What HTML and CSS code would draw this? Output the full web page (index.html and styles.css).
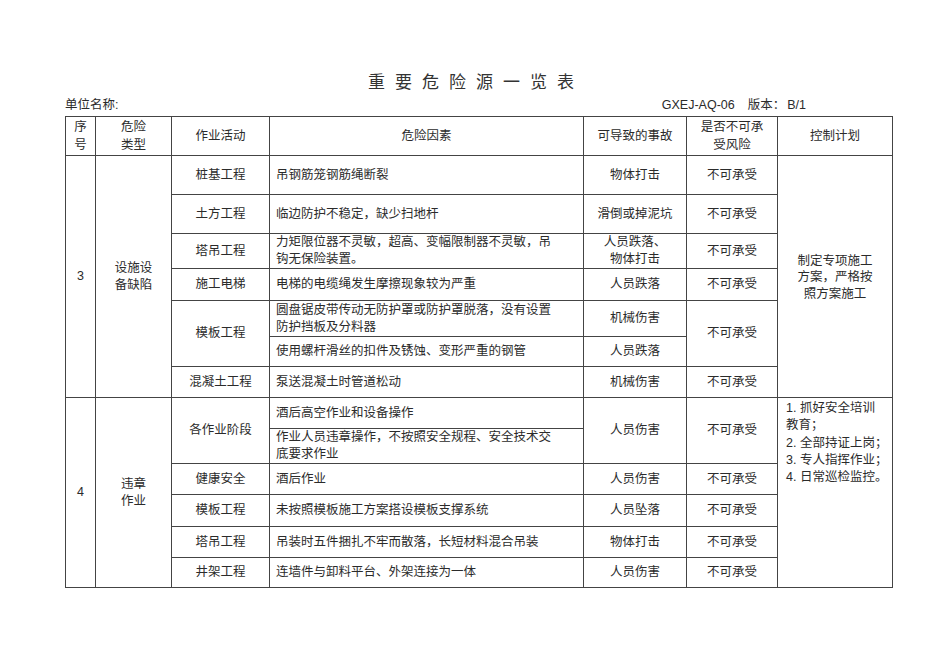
FILE: index.html
```html
<!DOCTYPE html>
<html lang="zh-CN">
<head>
<meta charset="utf-8">
<title>重要危险源一览表</title>
<link rel="stylesheet" href="styles.css">
</head>
<body>
<div class="page">
  <h1 class="title">重要危险源一览表</h1>
  <div class="meta">
    <span>单位名称:</span>
    <span class="code">GXEJ-AQ-06<span class="ver">版本：</span>B/1</span>
  </div>
  <div class="sheet">
    <div class="c hd">序<br>号</div>
    <div class="c hd">危险<br>类型</div>
    <div class="c hd">作业活动</div>
    <div class="c hd">危险因素</div>
    <div class="c hd">可导致的事故</div>
    <div class="c hd">是否不可承<br>受风险</div>
    <div class="c hd last">控制计划</div>

    <div class="c num r7">3</div>
    <div class="c r7">设施设<br>备缺陷</div>
    <div class="c">桩基工程</div>
    <div class="c f">吊钢筋笼钢筋绳断裂</div>
    <div class="c">物体打击</div>
    <div class="c">不可承受</div>
    <div class="c r7 last plan">制定专项施工<br>方案，严格按<br>照方案施工</div>

    <div class="c">土方工程</div>
    <div class="c f">临边防护不稳定，缺少扫地杆</div>
    <div class="c">滑倒或掉泥坑</div>
    <div class="c">不可承受</div>

    <div class="c">塔吊工程</div>
    <div class="c f">力矩限位器不灵敏，超高、变幅限制器不灵敏，吊钩无保险装置。</div>
    <div class="c">人员跌落、<br>物体打击</div>
    <div class="c">不可承受</div>

    <div class="c">施工电梯</div>
    <div class="c f">电梯的电缆绳发生摩擦现象较为严重</div>
    <div class="c">人员跌落</div>
    <div class="c">不可承受</div>

    <div class="c r2">模板工程</div>
    <div class="c f">圆盘锯皮带传动无防护罩或防护罩脱落，没有设置防护挡板及分料器</div>
    <div class="c">机械伤害</div>
    <div class="c r2">不可承受</div>
    <div class="c f">使用螺杆滑丝的扣件及锈蚀、变形严重的钢管</div>
    <div class="c">人员跌落</div>

    <div class="c">混凝土工程</div>
    <div class="c f">泵送混凝土时管道松动</div>
    <div class="c">机械伤害</div>
    <div class="c">不可承受</div>

    <div class="c num r6 bottom">4</div>
    <div class="c r6 bottom">违章<br>作业</div>
    <div class="c r2">各作业阶段</div>
    <div class="c f">酒后高空作业和设备操作</div>
    <div class="c r2">人员伤害</div>
    <div class="c r2">不可承受</div>
    <div class="c r6 last bottom list">1. 抓好安全培训<br>教育；<br>2. 全部持证上岗；<br>3. 专人指挥作业；<br>4. 日常巡检监控。</div>
    <div class="c f">作业人员违章操作，不按照安全规程、安全技术交底要求作业</div>

    <div class="c">健康安全</div>
    <div class="c f">酒后作业</div>
    <div class="c">人员伤害</div>
    <div class="c">不可承受</div>

    <div class="c">模板工程</div>
    <div class="c f">未按照模板施工方案搭设模板支撑系统</div>
    <div class="c">人员坠落</div>
    <div class="c">不可承受</div>

    <div class="c">塔吊工程</div>
    <div class="c f">吊装时五件捆扎不牢而散落，长短材料混合吊装</div>
    <div class="c">物体打击</div>
    <div class="c">不可承受</div>

    <div class="c bottom">井架工程</div>
    <div class="c f bottom">连墙件与卸料平台、外架连接为一体</div>
    <div class="c bottom">人员伤害</div>
    <div class="c bottom">不可承受</div>
  </div>
</div>
</body>
</html>
```

FILE: styles.css
```css
html, body {
  margin: 0;
  padding: 0;
  background: #ffffff;
}

body {
  font-family: "Liberation Sans", "Noto Sans CJK SC", sans-serif;
  color: #2b2b2b;
  font-size: 12.5px;
}

.page {
  width: 828px;
  margin-left: 65px;
  padding-top: 71px;
}

.title {
  margin: 0;
  font-family: "Noto Sans CJK SC", sans-serif;
  font-weight: 400;
  font-size: 17px;
  line-height: 20px;
  letter-spacing: 10px;
  text-align: center;
  padding-right: 6px;
  color: #333;
}

.meta {
  display: flex;
  justify-content: space-between;
  margin-top: 6px;
  height: 19px;
  line-height: 16px;
  font-size: 12.5px;
}

.code {
  padding-right: 87px;
}

.ver {
  margin-left: 13px;
  margin-right: 2px;
}

.sheet {
  display: grid;
  grid-template-columns: 30px 76px 98px 314px 103px 91px 115px;
  grid-template-rows: 39px 39px 39px 35px 32px 36px 30px 31px 31px 35px 31px 32px 31px 30px;
  border-left: 1px solid #444;
  border-top: 1px solid #444;
  width: 827px;
}

.c {
  border-right: 1px solid #444;
  border-bottom: 1px solid #444;
  display: flex;
  align-items: center;
  justify-content: center;
  text-align: center;
  line-height: 17px;
  overflow: hidden;
}

.hd {
  line-height: 18px;
}

.num {
  font-size: 12.5px;
}

.f {
  justify-content: flex-start;
  text-align: left;
  padding: 0 27px 0 6px;
}

.r2 { grid-row: span 2; }
.r6 { grid-row: span 6; }
.r7 { grid-row: span 7; }

.plan {
  line-height: 16.5px;
  padding-top: 2px;
}

.list {
  align-items: flex-start;
  justify-content: flex-start;
  text-align: left;
  padding: 2px 4px 0 8px;
  line-height: 17.3px;
}

.last {
  border-right-width: 1px;
}
```
